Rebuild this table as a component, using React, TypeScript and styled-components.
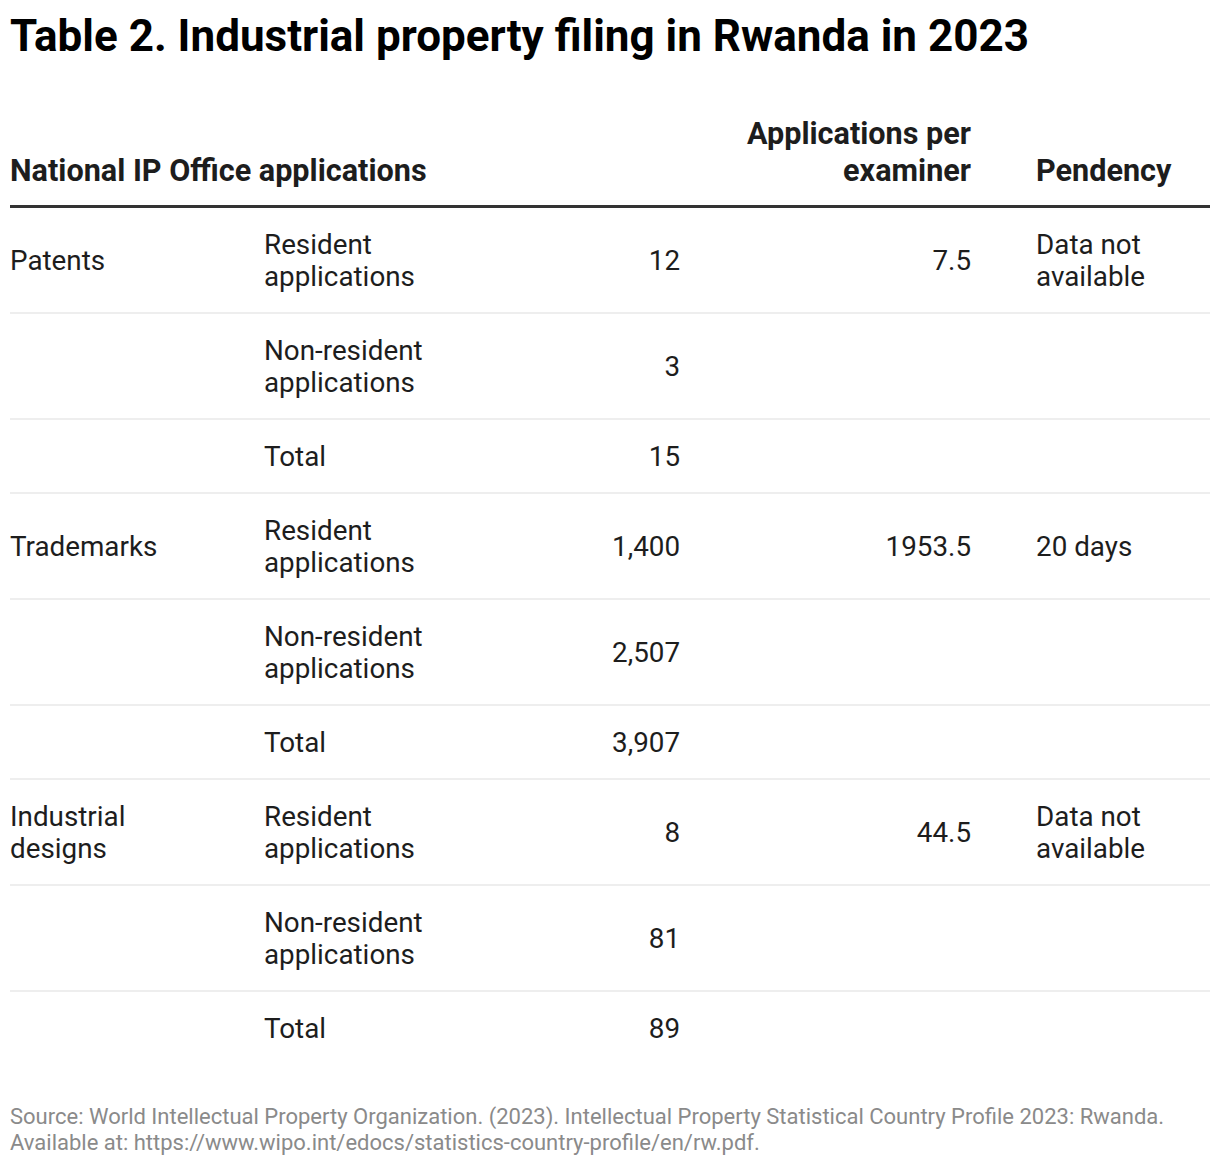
import styled, { createGlobalStyle } from 'styled-components';

const GlobalStyle = createGlobalStyle`
  html, body {
    margin: 0;
    padding: 0;
    background: #ffffff;
  }
  body {
    font-family: Roboto, "Noto Sans", "Liberation Sans", sans-serif;
    color: #1d1d1d;
  }
`;

type Row = {
  type?: string;
  kind: string;
  count: string;
  perExaminer?: string;
  pendency?: string;
};

const rows: Row[] = [
  { type: 'Patents', kind: 'Resident applications', count: '12', perExaminer: '7.5', pendency: 'Data not available' },
  { kind: 'Non-resident applications', count: '3' },
  { kind: 'Total', count: '15' },
  { type: 'Trademarks', kind: 'Resident applications', count: '1,400', perExaminer: '1953.5', pendency: '20 days' },
  { kind: 'Non-resident applications', count: '2,507' },
  { kind: 'Total', count: '3,907' },
  { type: 'Industrial designs', kind: 'Resident applications', count: '8', perExaminer: '44.5', pendency: 'Data not available' },
  { kind: 'Non-resident applications', count: '81' },
  { kind: 'Total', count: '89' },
];

const Page = styled.div`
  width: 1200px;
  padding: 10px 10px 0;
`;

const Title = styled.h1`
  margin: 0;
  font-size: 44px;
  line-height: 52px;
  font-weight: 700;
  color: #000;
`;

const Table = styled.table`
  margin-top: 53px;
  width: 1200px;
  border-collapse: collapse;
  table-layout: fixed;
`;

const HeadCell = styled.th<{ $align?: 'left' | 'right'; $padLeft?: number }>`
  text-align: ${(p) => p.$align ?? 'left'};
  vertical-align: bottom;
  font-size: 30.6px;
  line-height: 37px;
  font-weight: 700;
  color: #1d1d1d;
  padding: 0 0 16px ${(p) => p.$padLeft ?? 0}px;
  border-bottom: 3px solid #333;
`;

const BodyRow = styled.tr<{ $last?: boolean }>`
  border-bottom: ${(p) => (p.$last ? 'none' : '2px solid #eeeeee')};
`;

const Cell = styled.td<{ $align?: 'left' | 'right'; $padLeft?: number; $padRight?: number }>`
  text-align: ${(p) => p.$align ?? 'left'};
  vertical-align: middle;
  font-size: 27.8px;
  line-height: 32px;
  padding: 21px ${(p) => p.$padRight ?? 0}px 19px ${(p) => p.$padLeft ?? 0}px;
  color: #1d1d1d;
`;

const Source = styled.p`
  margin: 40px 0 0;
  font-size: 22px;
  line-height: 26px;
  color: #8a8a8a;
`;

export default function App() {
  return (
    <Page>
      <GlobalStyle />
      <Title>Table 2. Industrial property filing in Rwanda in 2023</Title>
      <Table>
        <colgroup>
          <col style={{ width: 254 }} />
          <col style={{ width: 200 }} />
          <col style={{ width: 216 }} />
          <col style={{ width: 291 }} />
          <col style={{ width: 239 }} />
        </colgroup>
        <thead>
          <tr>
            <HeadCell colSpan={3}>National IP Office applications</HeadCell>
            <HeadCell $align="right">Applications per examiner</HeadCell>
            <HeadCell $padLeft={65}>Pendency</HeadCell>
          </tr>
        </thead>
        <tbody>
          {rows.map((r, i) => (
            <BodyRow key={i} $last={i === rows.length - 1}>
              <Cell $padRight={50}>{r.type}</Cell>
              <Cell>{r.kind}</Cell>
              <Cell $align="right">{r.count}</Cell>
              <Cell $align="right">{r.perExaminer}</Cell>
              <Cell $padLeft={65}>{r.pendency}</Cell>
            </BodyRow>
          ))}
        </tbody>
      </Table>
      <Source>
        Source: World Intellectual Property Organization. (2023). Intellectual Property Statistical Country Profile 2023: Rwanda.
        <br />
        Available at: https://www.wipo.int/edocs/statistics-country-profile/en/rw.pdf.
      </Source>
    </Page>
  );
}
